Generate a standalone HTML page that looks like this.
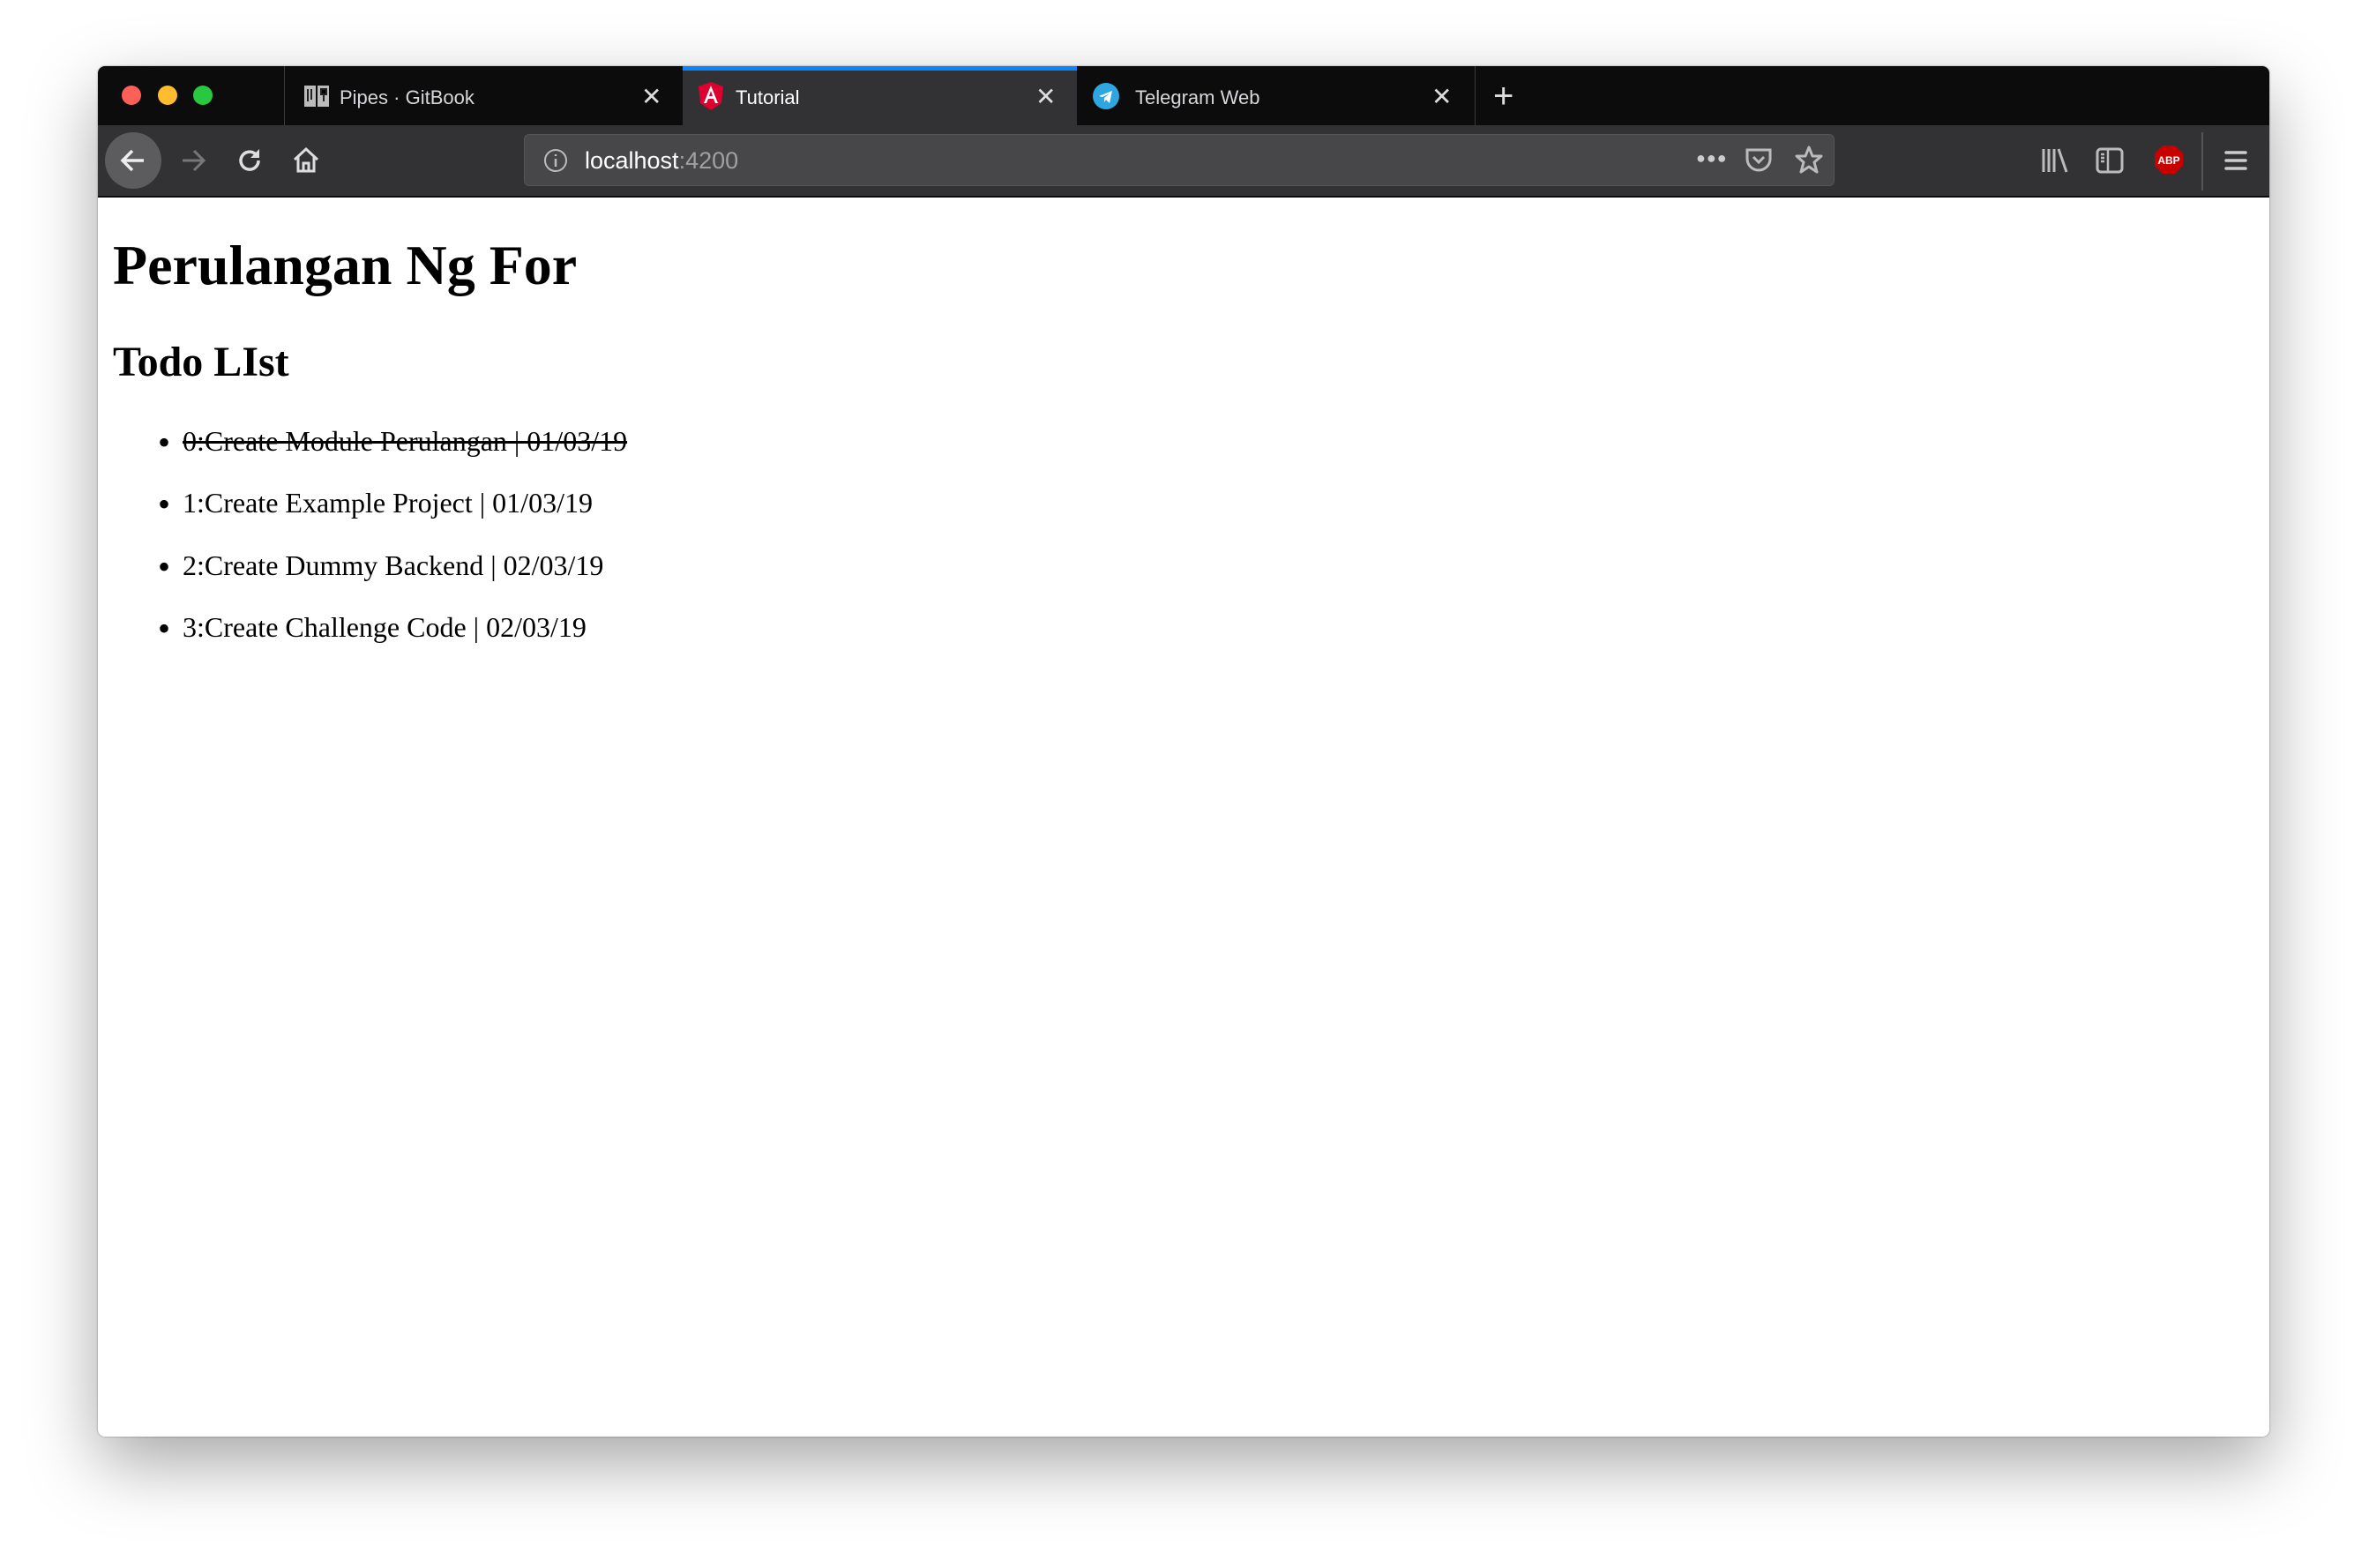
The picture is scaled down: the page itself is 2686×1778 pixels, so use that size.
<!DOCTYPE html>
<html><head><meta charset="utf-8"><style>
*{margin:0;padding:0;box-sizing:border-box}
body{width:2686px;height:1778px;background:#fff;position:relative;overflow:hidden;font-family:"Liberation Sans",sans-serif}
.win{position:absolute;left:111px;top:75px;width:2462px;height:1554px;background:#fff;border-radius:8px;overflow:hidden;box-shadow:0 30px 80px rgba(0,0,0,.35),0 0 2px rgba(0,0,0,.4)}
.tabs{position:absolute;left:0;top:0;width:100%;height:67px;background:#0c0c0d}
.nav{position:absolute;left:0;top:67px;width:100%;height:82px;background:#323234;border-bottom:2px solid #0c0c0d}
.dot{position:absolute;top:22px;width:22px;height:22px;border-radius:50%}
.tab{position:absolute;top:0;height:67px;color:#d7d7db;font-size:22px}
.tab span{position:absolute;top:23px}
.x{position:absolute;font-size:28px;color:#ddd;font-weight:300}
.ab{position:absolute}
.content{position:absolute;left:0;top:149px;width:100%;font-family:"Liberation Serif",serif;color:#000}
.t{position:absolute;white-space:nowrap}
.b{position:absolute;font-size:40px;line-height:1}
</style></head><body>
<div class="win">
 <div class="tabs">
  <div class="dot" style="left:27px;background:#fe5f57"></div>
  <div class="dot" style="left:68px;background:#febc2e"></div>
  <div class="dot" style="left:108px;background:#28c840"></div>
  <div class="ab" style="left:211px;top:0;width:1px;height:67px;background:#3a3a3a"></div>
  <div class="tab" style="left:211px;width:452px">
   <svg class="ab" style="left:22px;top:20px" width="30" height="28" viewBox="0 0 30 28"><path d="M1 2h13v24H1zM16 2h13v24H16z" fill="#bbb"/><path d="M5 6v14M9 6v12M20 6l6 0v6h-6zM23 12v8" stroke="#222" stroke-width="2"/></svg>
   <span style="left:63px">Pipes · GitBook</span><span class="x" style="left:405px;top:18px">✕</span>
  </div>
  <div class="tab" style="left:663px;width:447px;background:#323234;color:#fff">
   <div class="ab" style="left:0;top:0;width:100%;height:5px;background:#0a84ff"></div>
   <svg class="ab" style="left:18px;top:18px" width="28" height="32" viewBox="0 0 28 32"><path d="M14 0L28 5l-2 19-12 8-12-8L0 5z" fill="#dd0031"/><path d="M14 4L6 24h3l2-5h6l2 5h3zM12 16l2-6 2 6z" fill="#fff"/></svg>
   <span style="left:60px">Tutorial</span><span class="x" style="left:400px;top:18px">✕</span>
  </div>
  <div class="tab" style="left:1110px;width:451px">
   <svg class="ab" style="left:18px;top:19px" width="30" height="30" viewBox="0 0 30 30"><circle cx="15" cy="15" r="15" fill="#2ea6e0"/><path d="M7 15l15-6-3 14-4-4-2 3v-5l6-5-8 4z" fill="#fff"/></svg>
   <span style="left:66px">Telegram Web</span><span class="x" style="left:402px;top:18px">✕</span>
  </div>
  <div class="ab" style="left:1561px;top:0;width:1px;height:67px;background:#3a3a3a"></div>
  <div class="ab" style="left:1582px;top:12px;color:#ddd;font-size:40px;font-weight:300">+</div>
 </div>
 <div class="nav">
  <div class="ab" style="left:8px;top:8px;width:64px;height:64px;border-radius:50%;background:#5c5c5f"></div>
  <svg class="ab" style="left:24px;top:24px" width="32" height="32" viewBox="0 0 32 32"><path d="M28 16H5M15 5L4 16l11 11" stroke="#eee" stroke-width="3.5" fill="none"/></svg>
  <svg class="ab" style="left:92px;top:24px" width="32" height="32" viewBox="0 0 32 32"><path d="M4 16h23M17 5l11 11-11 11" stroke="#777" stroke-width="3" fill="none"/></svg>
  <svg class="ab" style="left:156px;top:24px" width="32" height="32" viewBox="0 0 32 32"><path d="M26 16a10 10 0 1 1-3-7" stroke="#ddd" stroke-width="3.5" fill="none"/><path d="M27 3v10H17z" fill="#ddd"/></svg>
  <svg class="ab" style="left:219px;top:22px" width="34" height="34" viewBox="0 0 34 34"><path d="M4 17L17 5l13 12M8 14v16h18V14M14 30v-9h6v9" stroke="#ddd" stroke-width="3" fill="none"/></svg>
  <div class="ab" style="left:483px;top:10px;width:1486px;height:59px;border-radius:6px;background:#474749;border:1px solid #555"></div>
  <svg class="ab" style="left:505px;top:26px" width="28" height="28" viewBox="0 0 28 28"><circle cx="14" cy="14" r="12" stroke="#bbb" stroke-width="2" fill="none"/><path d="M14 12v9M14 7v2" stroke="#bbb" stroke-width="2.5"/></svg>
  <div class="ab" style="left:552px;top:25px;font-size:27px;color:#fff">localhost<span style="color:#a0a0a3">:4200</span></div>
  <div class="ab" style="left:1812px;top:27px;font-size:18px;color:#ccc;letter-spacing:1px">●●●</div>
  <svg class="ab" style="left:1867px;top:24px" width="32" height="32" viewBox="0 0 32 32"><path d="M3 4h26v10a13 13 0 0 1-26 0z" stroke="#bbb" stroke-width="3" fill="none"/><path d="M10 12l6 6 6-6" stroke="#bbb" stroke-width="3" fill="none"/></svg>
  <svg class="ab" style="left:1923px;top:22px" width="34" height="34" viewBox="0 0 34 34"><path d="M17 3l4 10h10l-8 7 3 11-9-6-9 6 3-11-8-7h10z" stroke="#bbb" stroke-width="3" fill="none" stroke-linejoin="round"/></svg>
  <svg class="ab" style="left:2203px;top:24px" width="32" height="32" viewBox="0 0 32 32"><path d="M3 3v26M9 3v26M15 3v26M20 3l9 26" stroke="#bbb" stroke-width="3"/></svg>
  <svg class="ab" style="left:2265px;top:24px" width="32" height="32" viewBox="0 0 32 32"><rect x="2" y="3" width="28" height="26" rx="4" stroke="#bbb" stroke-width="3" fill="none"/><path d="M14 3v26M6 9h4M6 13h4M6 17h4" stroke="#bbb" stroke-width="2.5"/></svg>
  <svg class="ab" style="left:2331px;top:22px" width="34" height="34" viewBox="0 0 34 34"><path d="M10 1h14l9 9v14l-9 9H10l-9-9V10z" fill="#c80000"/><text x="17" y="22" font-family="Liberation Sans" font-weight="bold" font-size="12" fill="#fff" text-anchor="middle">ABP</text></svg>
  <div class="ab" style="left:2385px;top:8px;width:2px;height:66px;background:#555"></div>
  <svg class="ab" style="left:2410px;top:26px" width="28" height="28" viewBox="0 0 28 28"><path d="M3 5h22M3 14h22M3 23h22" stroke="#ccc" stroke-width="3.5" stroke-linecap="round"/></svg>
 </div>
 <div class="content">
  <div class="t" style="left:17px;top:40px;font-size:64px;font-weight:bold">Perulangan Ng For</div>
  <div class="t" style="left:17px;top:159px;font-size:48px;font-weight:bold">Todo LIst</div>
  <div class="b" style="left:68px;top:258px">•</div>
  <div class="t" style="left:96px;top:258px;font-size:32px;text-decoration:line-through">0:Create Module Perulangan | 01/03/19</div>
  <div class="b" style="left:68px;top:328px">•</div>
  <div class="t" style="left:96px;top:328px;font-size:32px">1:Create Example Project | 01/03/19</div>
  <div class="b" style="left:68px;top:399px">•</div>
  <div class="t" style="left:96px;top:399px;font-size:32px">2:Create Dummy Backend | 02/03/19</div>
  <div class="b" style="left:68px;top:469px">•</div>
  <div class="t" style="left:96px;top:469px;font-size:32px">3:Create Challenge Code | 02/03/19</div>
 </div>
</div>
</body></html>
